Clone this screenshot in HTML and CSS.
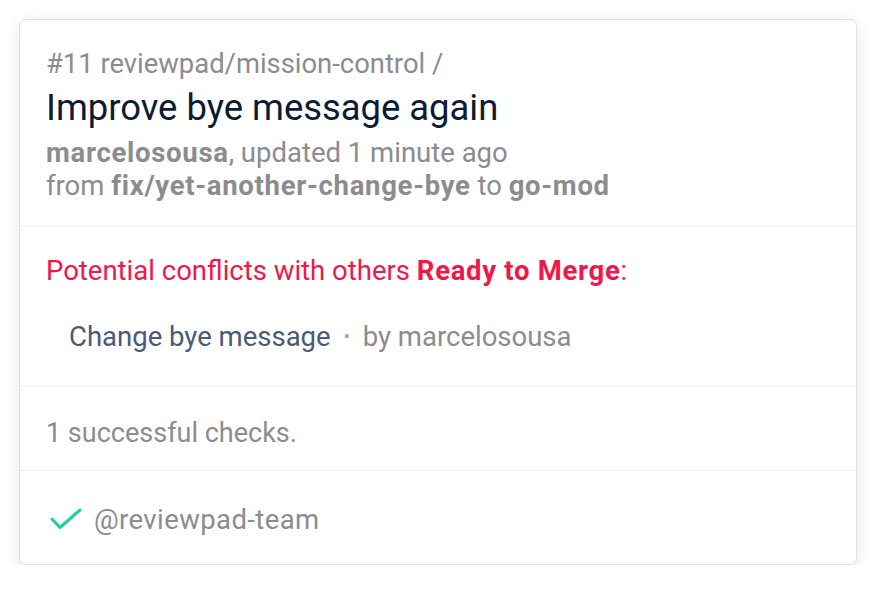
FILE: index.html
```html
<!DOCTYPE html>
<html>
<head>
<meta charset="utf-8">
<link rel="stylesheet" href="styles.css">
</head>
<body>
<div class="card">
  <div class="section header">
    <div class="crumb">#11 reviewpad/mission-control /</div>
    <div class="title">Improve bye message again</div>
    <div class="meta"><b>marcelosousa</b>, updated 1 minute ago</div>
    <div class="meta">from <b>fix/yet-another-change-bye</b> to <b>go-mod</b></div>
  </div>
  <div class="section conflicts">
    <div class="warn">Potential conflicts with others <b>Ready to Merge</b>:</div>
    <div class="item"><span class="item-title">Change bye message</span><span class="dot">•</span><span class="by">by marcelosousa</span></div>
  </div>
  <div class="section checks">
    <div class="muted">1 successful checks.</div>
  </div>
  <div class="section reviewers">
    <div class="reviewer">
      <svg class="check" width="32" height="24" viewBox="0 0 32 24"><polyline points="2,11 10,19.5 30,2" fill="none" stroke="#1fd29d" stroke-width="3" stroke-linecap="round" stroke-linejoin="round"/></svg>
      <span class="muted handle">@reviewpad-team</span>
    </div>
  </div>
</div>
</body>
</html>
```
FILE: styles.css
```css
html, body {
  margin: 0;
  padding: 0;
  background: #ffffff;
}
body {
  font-family: Roboto, "Liberation Sans", sans-serif;
  color: #8c8c90;
  padding: 19px 23px 0 19px;
}
.card {
  width: 836px;
  border: 1px solid #e0e0e2;
  border-radius: 7px;
  box-shadow: 0 4px 16px rgba(0, 0, 0, 0.1);
  background: #fff;
}
.section {
  padding: 0 26px;
  border-bottom: 1px solid #efeff1;
}
.section:last-child {
  border-bottom: none;
}
.header {
  padding-top: 28px;
  padding-bottom: 24px;
}
.crumb {
  font-size: 27.4px;
  line-height: 32px;
  color: #8c8c90;
}
.title {
  font-size: 36.4px;
  line-height: 56px;
  color: #0c1a33;
}
.meta {
  font-size: 27.5px;
  line-height: 33px;
}
b {
  font-weight: 700;
  letter-spacing: 0.7px;
}
.conflicts {
  padding-top: 28px;
  padding-bottom: 33px;
}
.warn {
  font-size: 27.5px;
  line-height: 32px;
  color: #f1174b;
}
.item {
  margin-top: 34px;
  padding-left: 23px;
  font-size: 27.5px;
  line-height: 32px;
  display: flex;
  align-items: center;
}
.item-title {
  color: #4a5a78;
}
.dot {
  color: #a0a0a4;
  font-size: 18px;
  margin: 0 13px;
}
.by {
  color: #8c8c90;
}
.checks {
  padding-top: 30px;
  padding-bottom: 21px;
}
.muted {
  font-size: 27px;
  line-height: 32px;
  color: #8c8c90;
}
.handle {
  font-size: 27.5px;
  letter-spacing: 0.4px;
}
.reviewers {
  padding-top: 33px;
  padding-bottom: 28px;
}
.reviewer {
  display: flex;
  align-items: center;
  gap: 12px;
  padding-left: 4px;
}
.check {
  display: block;
}
```
